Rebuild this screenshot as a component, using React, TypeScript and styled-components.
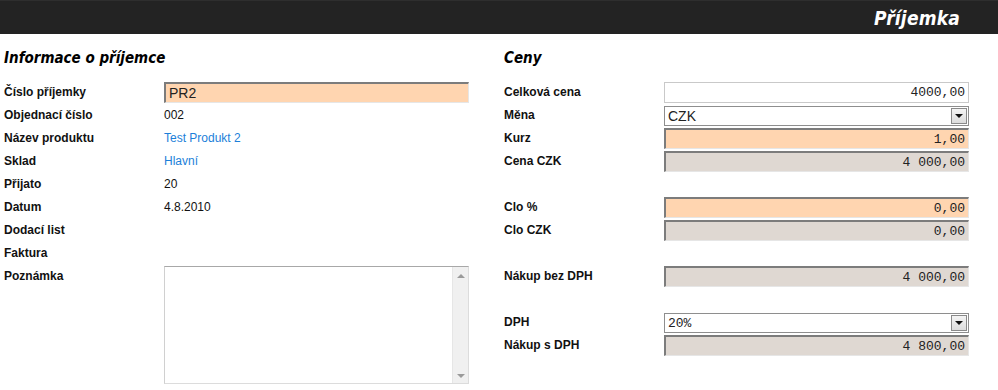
import React from "react";
import styled, { createGlobalStyle, css } from "styled-components";

const Global = createGlobalStyle`
  html, body { margin: 0; padding: 0; background: #ffffff; }
  body { font-family: "Liberation Sans", Arial, sans-serif; font-size: 12px; color: #000; }
  * { box-sizing: border-box; }
`;

const Header = styled.header`
  height: 34px;
  background: #232323;
  border-top: 1px solid #2e2e2e;
  display: flex;
  align-items: center;
  justify-content: flex-end;
  padding-right: 38px;
`;

const Title = styled.h1`
  margin: 0;
  font-family: "DejaVu Sans Condensed", "DejaVu Sans", sans-serif;
  font-weight: bold;
  font-style: italic;
  font-size: 19px;
  color: #ffffff;
  letter-spacing: 0.2px;
`;

const Main = styled.main`
  display: grid;
  grid-template-columns: 500px 1fr;
  padding: 0 4px;
`;

const Section = styled.section`
  display: flex;
  flex-direction: column;
`;

const Heading = styled.h2`
  margin: 0;
  line-height: 48px;
  font-family: "DejaVu Sans Condensed", "DejaVu Sans", sans-serif;
  font-weight: bold;
  font-style: italic;
  font-size: 15px;
  color: #000;
`;

const Rows = styled.div`
  display: grid;
  grid-template-columns: 160px 305px;
  grid-auto-rows: 21px;
  row-gap: 2px;
  align-items: center;
`;

const Label = styled.div<{ $top?: boolean }>`
  font-weight: bold;
  font-size: 12px;
  line-height: 21px;
  color: #111;
  align-self: ${(p) => (p.$top ? "start" : "center")};
`;

const Value = styled.div<{ $link?: boolean }>`
  font-size: 12px;
  line-height: 21px;
  color: ${(p) => (p.$link ? "#1c7fd9" : "#111")};
`;

const Empty = styled.div`
  grid-column: 1 / span 2;
`;

type Variant = "plain" | "input" | "computed";

const insetBorder = css`
  border-top: 2px solid #7c7c7c;
  border-left: 2px solid #7c7c7c;
  border-right: 1px solid #e6e6e6;
  border-bottom: 1px solid #e6e6e6;
`;

const Field = styled.div<{ $variant: Variant; $mono?: boolean }>`
  height: 21px;
  display: flex;
  align-items: center;
  justify-content: ${(p) => (p.$mono ? "flex-end" : "flex-start")};
  padding: ${(p) => (p.$mono ? "0 3px 0 4px" : "0 3px")};
  font-family: ${(p) =>
    p.$mono ? `"Liberation Mono", "Courier New", monospace` : `"Liberation Sans", Arial, sans-serif`};
  font-size: ${(p) => (p.$mono ? "13px" : "14px")};
  color: #222;
  ${(p) =>
    p.$variant === "plain"
      ? css`
          background: #ffffff;
          border: 1px solid #c9c9c9;
        `
      : p.$variant === "input"
      ? css`
          background: #ffd5b0;
          ${insetBorder}
        `
      : css`
          background: #dfd8d2;
          ${insetBorder}
        `}
`;

const Select = styled.div<{ $mono?: boolean }>`
  height: 20px;
  align-self: end;
  display: flex;
  align-items: center;
  justify-content: space-between;
  padding: 0 1px 0 3px;
  background: #ffffff;
  border: 1px solid #8e8e8e;
  font-family: ${(p) =>
    p.$mono ? `"Liberation Mono", "Courier New", monospace` : `"Liberation Sans", Arial, sans-serif`};
  font-size: ${(p) => (p.$mono ? "13px" : "14px")};
  color: #222;
`;

const DropButton = styled.span`
  width: 16px;
  height: 16px;
  display: flex;
  align-items: center;
  justify-content: center;
  background: linear-gradient(#f4f4f4, #dcdcdc);
  border: 1px solid #8a8a8a;
`;

const Triangle = styled.span`
  width: 0;
  height: 0;
  border-left: 4px solid transparent;
  border-right: 4px solid transparent;
  border-top: 4px solid #111;
`;

const TextArea = styled.div`
  grid-row: span 6;
  align-self: start;
  height: 118px;
  display: flex;
  justify-content: flex-end;
  background: #ffffff;
  border: 1px solid #dcdcdc;
  border-top-color: #a8a8a8;
  border-left-color: #d0d0d0;
`;

const ScrollBar = styled.div`
  width: 16px;
  display: flex;
  flex-direction: column;
  justify-content: space-between;
  align-items: center;
  padding: 7px 0 5px;
  background: #f0f0f0;
  border-left: 1px solid #e6e6e6;
`;

const Arrow = styled.span<{ $down?: boolean }>`
  width: 0;
  height: 0;
  border-left: 4px solid transparent;
  border-right: 4px solid transparent;
  ${(p) =>
    p.$down
      ? css`border-top: 4px solid #9a9a9a;`
      : css`border-bottom: 4px solid #9a9a9a;`}
`;

const Dropdown = ({ value, mono }: { value: string; mono?: boolean }) => (
  <Select $mono={mono}>
    <span>{value}</span>
    <DropButton>
      <Triangle />
    </DropButton>
  </Select>
);

export default function App() {
  return (
    <>
      <Global />
      <Header>
        <Title>Příjemka</Title>
      </Header>
      <Main>
        <Section>
          <Heading>Informace o příjemce</Heading>
          <Rows>
            <Label>Číslo příjemky</Label>
            <Field $variant="input">PR2</Field>
            <Label>Objednací číslo</Label>
            <Value>002</Value>
            <Label>Název produktu</Label>
            <Value $link>Test Produkt 2</Value>
            <Label>Sklad</Label>
            <Value $link>Hlavní</Value>
            <Label>Přijato</Label>
            <Value>20</Value>
            <Label>Datum</Label>
            <Value>4.8.2010</Value>
            <Label>Dodací list</Label>
            <Value />
            <Label>Faktura</Label>
            <Value />
            <Label $top>Poznámka</Label>
            <TextArea>
              <ScrollBar>
                <Arrow />
                <Arrow $down />
              </ScrollBar>
            </TextArea>
          </Rows>
        </Section>
        <Section>
          <Heading>Ceny</Heading>
          <Rows>
            <Label>Celková cena</Label>
            <Field $variant="plain" $mono>4000,00</Field>
            <Label>Měna</Label>
            <Dropdown value="CZK" />
            <Label>Kurz</Label>
            <Field $variant="input" $mono>1,00</Field>
            <Label>Cena CZK</Label>
            <Field $variant="computed" $mono>4 000,00</Field>
            <Empty />
            <Label>Clo %</Label>
            <Field $variant="input" $mono>0,00</Field>
            <Label>Clo CZK</Label>
            <Field $variant="computed" $mono>0,00</Field>
            <Empty />
            <Label>Nákup bez DPH</Label>
            <Field $variant="computed" $mono>4 000,00</Field>
            <Empty />
            <Label>DPH</Label>
            <Dropdown value="20%" mono />
            <Label>Nákup s DPH</Label>
            <Field $variant="computed" $mono>4 800,00</Field>
          </Rows>
        </Section>
      </Main>
    </>
  );
}
